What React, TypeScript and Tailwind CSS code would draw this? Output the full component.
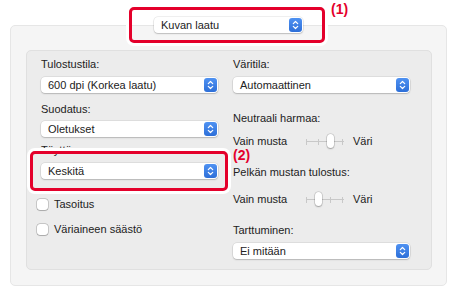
import React from "react";

const font = { fontFamily: '"Liberation Sans", Arial, sans-serif' };

function Stepper() {
  return (
    <div className="flex h-[14px] w-[13px] items-center justify-center rounded-[3px] bg-gradient-to-b from-[#4f92f2] to-[#2d6fd8]">
      <svg width="7" height="10" viewBox="0 0 7 10" fill="none">
        <path d="M1.3 3.6 L3.5 1.5 L5.7 3.6" stroke="white" strokeWidth="1.2" strokeLinecap="round" strokeLinejoin="round" />
        <path d="M1.3 6.4 L3.5 8.5 L5.7 6.4" stroke="white" strokeWidth="1.2" strokeLinecap="round" strokeLinejoin="round" />
      </svg>
    </div>
  );
}

function Select({ label, className = "" }: { label: string; className?: string }) {
  return (
    <div
      className={`flex h-[16px] items-center justify-between rounded-[4px] bg-white pl-[7px] pr-[1px] shadow-[0_0_0_0.5px_rgba(0,0,0,0.12),0_1px_1.5px_rgba(0,0,0,0.18)] ${className}`}
    >
      <span className="text-[11px] leading-[14px] text-[#222]">{label}</span>
      <Stepper />
    </div>
  );
}

function Label({ text, className = "" }: { text: string; className?: string }) {
  return <div className={`h-[14px] text-[11px] leading-[14px] text-[#222] ${className}`}>{text}</div>;
}

function Checkbox({ text, className = "" }: { text: string; className?: string }) {
  return (
    <div className={`flex h-[14px] items-center ${className}`}>
      <div className="ml-[-4px] h-[11px] w-[11px] rounded-[3px] bg-white shadow-[0_0_0_0.5px_rgba(0,0,0,0.3),0_0.5px_1px_rgba(0,0,0,0.15)]" />
      <span className="ml-[6px] text-[11px] leading-[14px] text-[#222]">{text}</span>
    </div>
  );
}

function Slider({ pos, className = "" }: { pos: number; className?: string }) {
  const ticks = [0, 12, 24, 36];
  return (
    <div className={`flex h-[16px] items-center ${className}`}>
      <span className="w-[73px] text-[11px] leading-[14px] text-[#222]">Vain musta</span>
      <div className="relative h-[16px] w-[38px]">
        <div className="absolute left-0 right-0 top-[8px] h-px bg-[#c8c8c8]" />
        {ticks.map((t) => (
          <div key={t} className="absolute top-[5.5px] h-[6px] w-px bg-[#c8c8c8]" style={{ left: t }} />
        ))}
        <div
          className="absolute top-[1px] h-[14px] w-[7px] rounded-[4px] bg-white shadow-[0_0_0_0.5px_rgba(0,0,0,0.2),0_1px_1.5px_rgba(0,0,0,0.25)]"
          style={{ left: ticks[pos] - 3 }}
        />
      </div>
      <span className="ml-[9px] text-[11px] leading-[14px] text-[#222]">Väri</span>
    </div>
  );
}

export default function App() {
  return (
    <div className="relative h-[301px] w-[452px] overflow-hidden bg-white" style={font}>
      <div className="ml-[10px] mt-[25px] flex h-[261px] w-[437px] flex-col items-center rounded-[5px] border border-[#e6e6e6] bg-[#f5f5f5]">
        <Select label="Kuvan laatu" className="mt-[-9px] w-[149px]" />
        <div className="mt-[17px] grid h-[220px] w-[406px] grid-cols-[177px_177px] gap-x-[15px] self-start ml-[15px] rounded-[5px] border border-[#e0e0e0] bg-[#ececec] pl-[14px] pt-[6px]">
          <div className="flex flex-col">
            <Label text="Tulostustila:" />
            <Select label="600 dpi (Korkea laatu)" className="mt-[6px]" />
            <Label text="Suodatus:" className="mt-[9px]" />
            <Select label="Oletukset" className="mt-[5px]" />
            <Label text="Täyttö:" className="mt-[6px]" />
            <Select label="Keskitä" className="mt-[6px]" />
            <Checkbox text="Tasoitus" className="mt-[18px]" />
            <Checkbox text="Väriaineen säästö" className="mt-[11px]" />
          </div>
          <div className="flex flex-col">
            <Label text="Väritila:" />
            <Select label="Automaattinen" className="mt-[6px]" />
            <Label text="Neutraali harmaa:" className="mt-[18px]" />
            <Slider pos={2} className="mt-[8px]" />
            <Label text="Pelkän mustan tulostus:" className="mt-[16px]" />
            <Slider pos={1} className="mt-[12px]" />
            <Label text="Tarttuminen:" className="mt-[16px]" />
            <Select label="Ei mitään" className="mt-[6px]" />
          </div>
        </div>
      </div>

      {/* callout overlays */}
      <div className="absolute left-[129px] top-[7px] h-[36px] w-[196px] rounded-[5px] border-[3px] border-[#e4002b] shadow-[0_0_0_3px_white]" />
      <div className="absolute left-[331px] top-[1px] text-[14px] font-bold leading-[16px] text-[#e4002b]">(1)</div>
      <div className="absolute left-[30px] top-[151px] h-[40px] w-[198px] rounded-[5px] border-[3px] border-[#e4002b] shadow-[0_0_0_3px_white]" />
      <div className="absolute left-[233px] top-[147px] text-[14px] font-bold leading-[16px] text-[#e4002b]">(2)</div>
    </div>
  );
}
